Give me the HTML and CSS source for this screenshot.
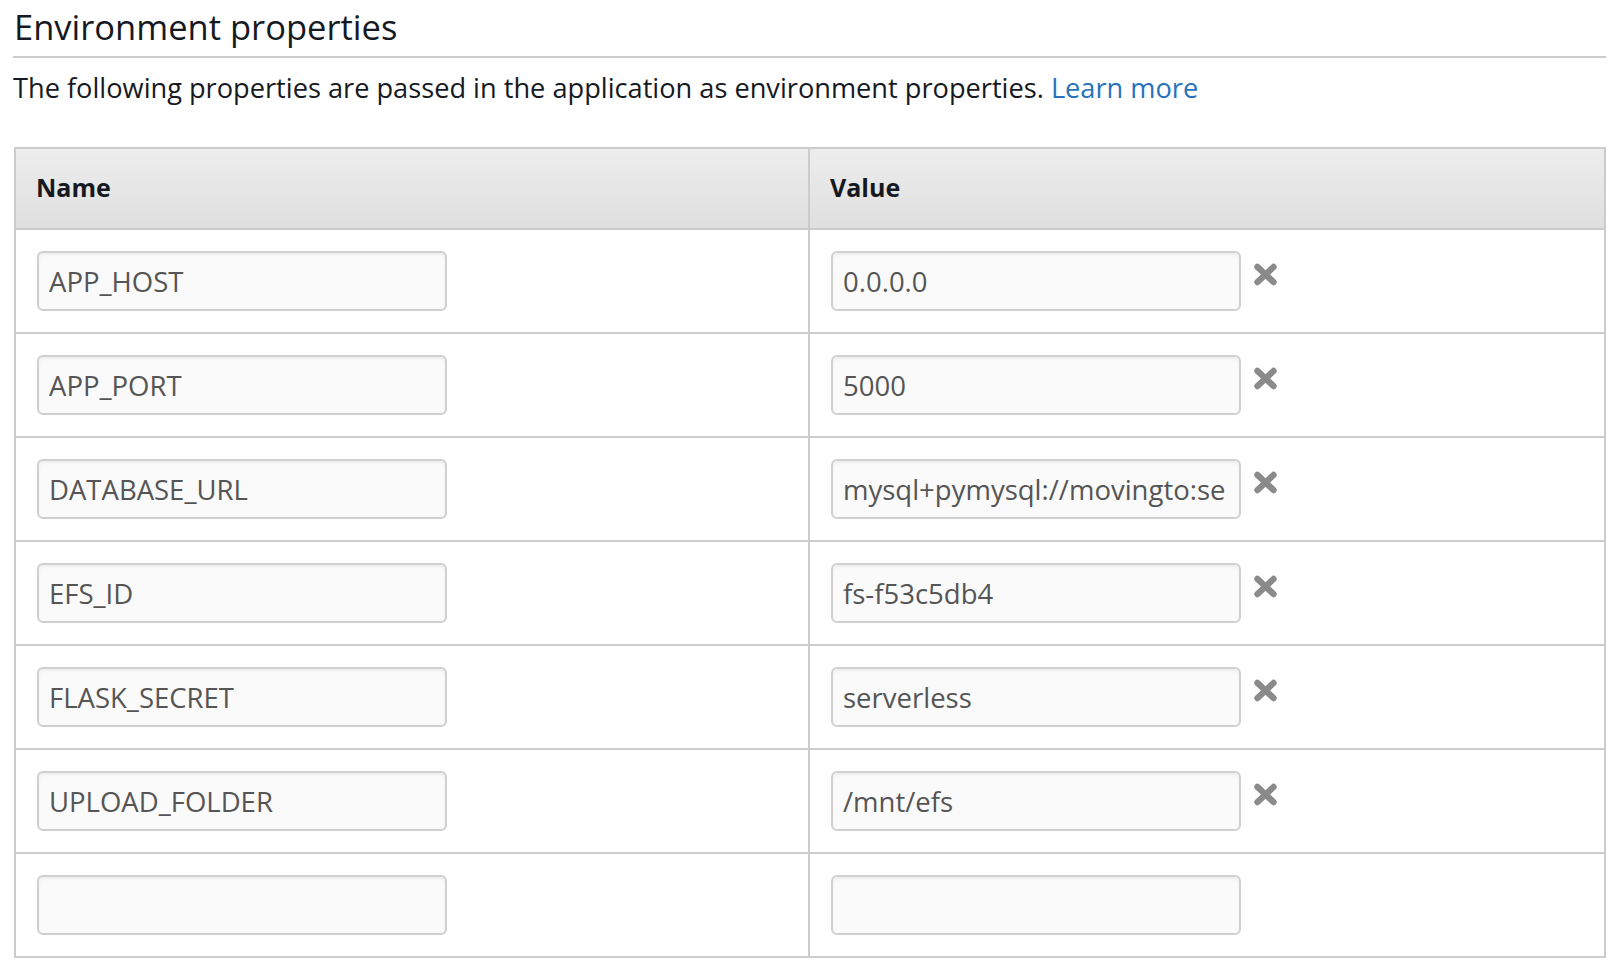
FILE: index.html
```html
<!DOCTYPE html>
<html lang="en">
<head>
<meta charset="utf-8">
<title>Environment properties</title>
<link rel="stylesheet" href="styles.css">
</head>
<body>
<section class="panel">
  <h2 class="panel-title">Environment properties</h2>
  <p class="panel-desc">The following properties are passed in the application as environment properties. <a href="#" class="link">Learn more</a></p>

  <div class="props-table">
    <div class="cell head">Name</div>
    <div class="cell head last-col">Value</div>

    <div class="cell"><input class="field" type="text" value="APP_HOST" readonly></div>
    <div class="cell last-col"><input class="field" type="text" value="0.0.0.0" readonly><button class="remove" aria-label="Remove"><svg viewBox="0 0 25 23" width="25" height="23"><path d="M4.5 4 L20.5 19 M20.5 4 L4.5 19" stroke="#8a8a8a" stroke-width="6.4" stroke-linecap="round"/></svg></button></div>

    <div class="cell"><input class="field" type="text" value="APP_PORT" readonly></div>
    <div class="cell last-col"><input class="field" type="text" value="5000" readonly><button class="remove" aria-label="Remove"><svg viewBox="0 0 25 23" width="25" height="23"><path d="M4.5 4 L20.5 19 M20.5 4 L4.5 19" stroke="#8a8a8a" stroke-width="6.4" stroke-linecap="round"/></svg></button></div>

    <div class="cell"><input class="field" type="text" value="DATABASE_URL" readonly></div>
    <div class="cell last-col"><input class="field" type="text" value="mysql+pymysql://movingto:secret@database:3306/app" readonly><button class="remove" aria-label="Remove"><svg viewBox="0 0 25 23" width="25" height="23"><path d="M4.5 4 L20.5 19 M20.5 4 L4.5 19" stroke="#8a8a8a" stroke-width="6.4" stroke-linecap="round"/></svg></button></div>

    <div class="cell"><input class="field" type="text" value="EFS_ID" readonly></div>
    <div class="cell last-col"><input class="field" type="text" value="fs-f53c5db4" readonly><button class="remove" aria-label="Remove"><svg viewBox="0 0 25 23" width="25" height="23"><path d="M4.5 4 L20.5 19 M20.5 4 L4.5 19" stroke="#8a8a8a" stroke-width="6.4" stroke-linecap="round"/></svg></button></div>

    <div class="cell"><input class="field" type="text" value="FLASK_SECRET" readonly></div>
    <div class="cell last-col"><input class="field" type="text" value="serverless" readonly><button class="remove" aria-label="Remove"><svg viewBox="0 0 25 23" width="25" height="23"><path d="M4.5 4 L20.5 19 M20.5 4 L4.5 19" stroke="#8a8a8a" stroke-width="6.4" stroke-linecap="round"/></svg></button></div>

    <div class="cell"><input class="field" type="text" value="UPLOAD_FOLDER" readonly></div>
    <div class="cell last-col"><input class="field" type="text" value="/mnt/efs" readonly><button class="remove" aria-label="Remove"><svg viewBox="0 0 25 23" width="25" height="23"><path d="M4.5 4 L20.5 19 M20.5 4 L4.5 19" stroke="#8a8a8a" stroke-width="6.4" stroke-linecap="round"/></svg></button></div>

    <div class="cell last-row"><input class="field" type="text" value=""></div>
    <div class="cell last-col last-row"><input class="field" type="text" value=""></div>
  </div>
</section>
</body>
</html>
```

FILE: styles.css
```css
html, body {
  margin: 0;
  padding: 0;
  background: #ffffff;
}

body {
  font-family: "Open Sans", "Liberation Sans", sans-serif;
  color: #16191f;
}

.panel {
  margin: 0 14px 0 13px;
}

.panel-title {
  margin: 0;
  padding: 5px 0 7px 1px;
  font-size: 34.5px;
  font-weight: 400;
  line-height: 44px;
  border-bottom: 2px solid #cccccc;
}

.panel-desc {
  margin: 12px 0 0 0;
  font-size: 27.2px;
  line-height: 36px;
}

.link {
  color: #2773bb;
  text-decoration: none;
}

.props-table {
  margin-top: 41px;
  margin-left: 1px;
  display: grid;
  grid-template-columns: 792px 1fr;
  border: 2px solid #cccccc;
}

.cell {
  display: flex;
  align-items: flex-start;
  padding: 21px 0 21px 21px;
  border-bottom: 2px solid #cccccc;
}

.cell.last-col {
  border-left: 2px solid #cccccc;
}

.cell.last-row {
  border-bottom: none;
}

.cell.head {
  height: 75px;
  padding: 0 0 4px 20px;
  align-items: center;
  font-size: 25px;
  font-weight: 700;
  background: linear-gradient(#ededed, #dfdfdf);
}

.field {
  box-sizing: border-box;
  width: 410px;
  height: 60px;
  margin: 0;
  padding: 0 13px 0 10px;
  border: 2px solid #d0d0d0;
  border-radius: 6px;
  background: #fafafa;
  box-shadow: inset 0 2px 3px rgba(0, 0, 0, 0.05);
  font-family: "Open Sans", "Liberation Sans", sans-serif;
  font-size: 27.5px;
  color: #555555;
  outline: none;
}

.remove {
  margin: 12px 0 0 12px;
  padding: 0;
  border: none;
  background: none;
  width: 25px;
  height: 23px;
  display: block;
  cursor: pointer;
}

.remove svg {
  display: block;
}
```
